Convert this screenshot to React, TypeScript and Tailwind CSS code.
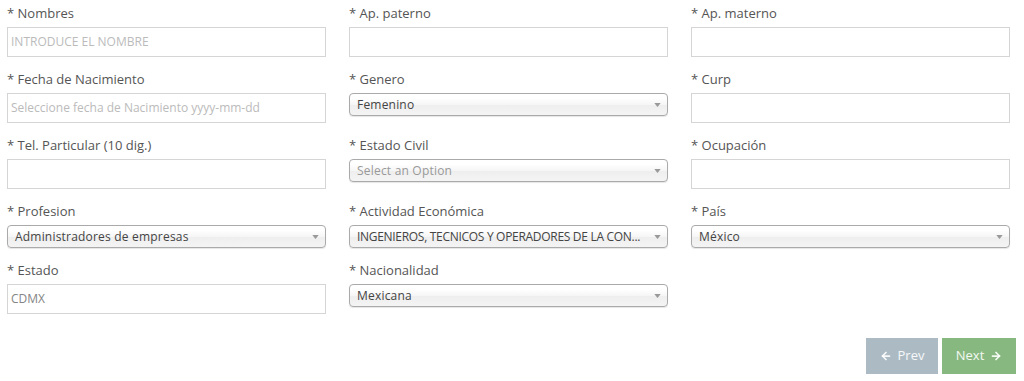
import { ArrowLeft, ArrowRight } from "lucide-react"

type Field = {
    label: string
    kind: "input" | "select"
    value?: string
    placeholder?: string
    tight?: boolean
}

const rows: Field[][] = [
    [
        { label: "* Nombres", kind: "input", placeholder: "INTRODUCE EL NOMBRE" },
        { label: "* Ap. paterno", kind: "input" },
        { label: "* Ap. materno", kind: "input" },
    ],
    [
        { label: "* Fecha de Nacimiento", kind: "input", placeholder: "Seleccione fecha de Nacimiento yyyy-mm-dd" },
        { label: "* Genero", kind: "select", value: "Femenino" },
        { label: "* Curp", kind: "input" },
    ],
    [
        { label: "* Tel. Particular (10 dig.)", kind: "input" },
        { label: "* Estado Civil", kind: "select", placeholder: "Select an Option" },
        { label: "* Ocupación", kind: "input" },
    ],
    [
        { label: "* Profesion", kind: "select", value: "Administradores de empresas" },
        { label: "* Actividad Económica", kind: "select", value: "INGENIEROS, TECNICOS Y OPERADORES DE LA CON...", tight: true },
        { label: "* País", kind: "select", value: "México" },
    ],
    [
        { label: "* Estado", kind: "input", value: "CDMX" },
        { label: "* Nacionalidad", kind: "select", value: "Mexicana" },
    ],
]

function Chosen({ value, placeholder, tight }: { value?: string; placeholder?: string; tight?: boolean }) {
    return (
        <div className="flex items-center justify-between h-[23px] border border-[#aaa] rounded-[4px] pl-[7px] pr-[6px] bg-[linear-gradient(#fff_20%,#f6f6f6_50%,#eee_52%,#f4f4f4_100%)] shadow-[0_1px_1px_rgba(0,0,0,0.1)]">
            <span className={"whitespace-nowrap text-[12px] leading-[21px] " + (value ? "text-[#444]" : "text-[#999]") + (tight ? " tracking-[-0.3px]" : " tracking-[0.2px]")}>
                {value ?? placeholder}
            </span>
            <svg width="7" height="4" viewBox="0 0 8 5" className="shrink-0">
                <path d="M0 0 L8 0 L4 5 Z" fill="#999" />
            </svg>
        </div>
    )
}

function TextBox({ value, placeholder }: { value?: string; placeholder?: string }) {
    return (
        <div className="h-[30px] border border-[#d5d5d5] bg-white px-[3px] flex items-center">
            <span className={"text-[12px] " + (value ? "text-[#858585]" : "text-[#bbb]")}>
                {value ?? placeholder}
            </span>
        </div>
    )
}

export default function App() {
    return (
        <div className="w-[1024px] h-[381px] bg-white pl-[7px] pt-[3px] font-['Open_Sans',sans-serif]">
            <div className="flex flex-col gap-[12px]">
                {rows.map((row, i) => (
                    <div key={i} className="grid grid-cols-[319px_319px_319px] gap-x-[23px]">
                        {row.map((f) => (
                            <div key={f.label} className="flex flex-col">
                                <label className="text-[13px] leading-[20px] text-[#555] mb-[4px]">{f.label}</label>
                                {f.kind === "input" ? (
                                    <TextBox value={f.value} placeholder={f.placeholder} />
                                ) : (
                                    <Chosen value={f.value} placeholder={f.placeholder} tight={f.tight} />
                                )}
                            </div>
                        ))}
                    </div>
                ))}
            </div>

            <div className="flex justify-end gap-[4px] pr-[8px] mt-[24px]">
                <button className="w-[72px] h-[36px] bg-[#abbac3] text-white/90 text-[13px] flex items-center justify-center gap-[6px]">
                    <ArrowLeft size={12} strokeWidth={3.5} />
                    Prev
                </button>
                <button className="w-[74px] h-[36px] bg-[#87b87f] text-white/90 text-[13px] flex items-center justify-center gap-[6px]">
                    Next
                    <ArrowRight size={12} strokeWidth={3.5} />
                </button>
            </div>
        </div>
    )
}
